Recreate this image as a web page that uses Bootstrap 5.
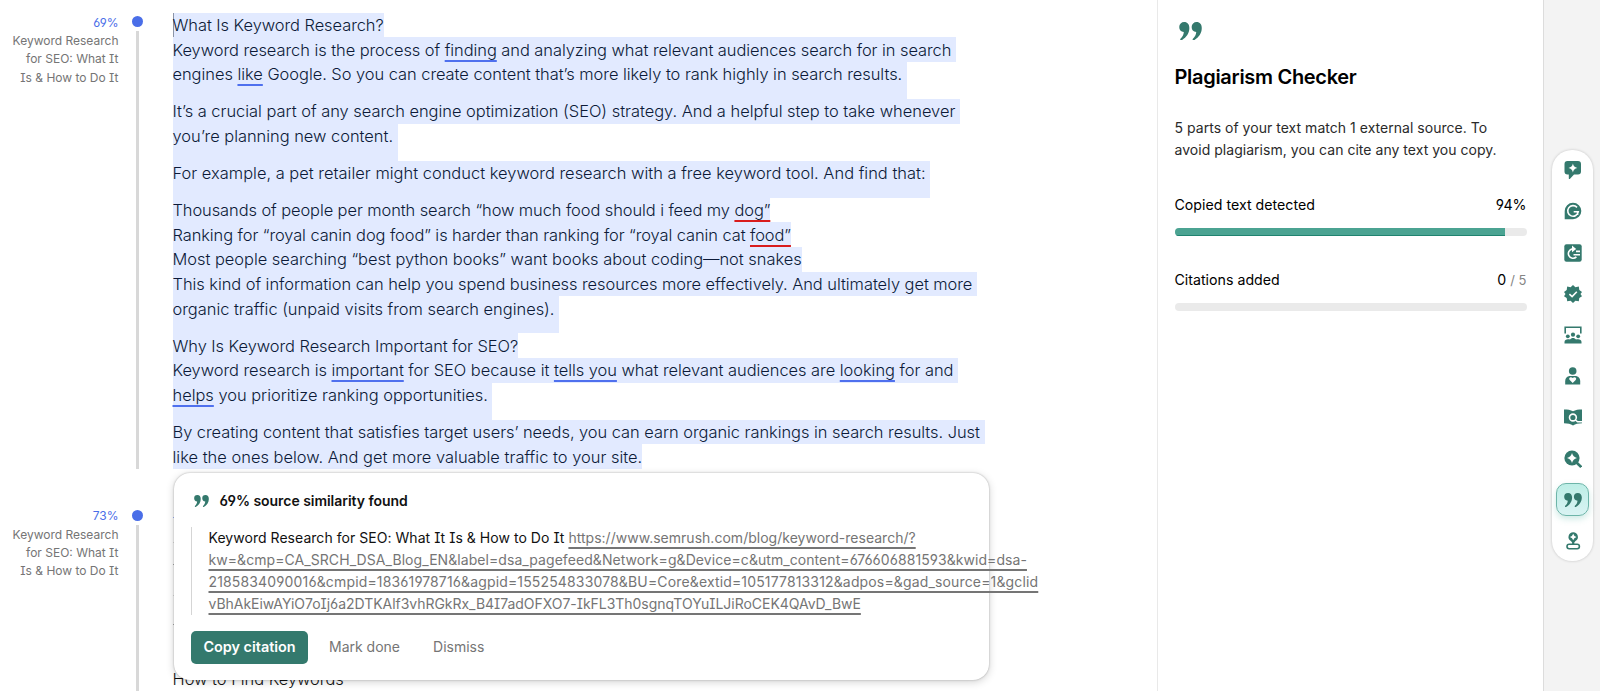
<!DOCTYPE html>
<html lang="en">
<head>
  <meta charset="UTF-8">
  <meta name="viewport" content="width=device-width, initial-scale=1">
  <title>Plagiarism Checker</title>
  <!-- Bootstrap CSS -->
  <link href="https://cdn.jsdelivr.net/npm/bootstrap@5.3.0/dist/css/bootstrap.min.css" rel="stylesheet">
  <style>
    :root { --green: #34796d; --blue: #4a6ee8; }
    body { font-family: Inter, "Liberation Sans", sans-serif; font-feature-settings: "cv08", "cv03", "cv04"; color: #111; font-size: 14px; line-height: 22px; height: 691px; }
    svg { fill: var(--green); }

    /* Editor */
    .editor { width: 1157px; height: 691px; }
    .match { height: 493.5px; padding-top: 12.5px; }
    .match-label { width: 118.5px; font-size: 12px; line-height: 18.3px; color: #757575; }
    .match-label .pct { color: var(--blue); line-height: 19.5px; }
    .track { width: 11px; margin-left: 13.5px; padding-top: 3.5px; }
    .dot { width: 11px; height: 11px; background: var(--blue); }
    .bar { width: 2.4px; background: #d8d8d8; margin-top: 4px; }
    .doc { margin-left: 29.5px; font-size: 16.44px; font-weight: 300; line-height: 24.66px; letter-spacing: -.02px; color: #0c1a38; font-feature-settings: normal; }
    .doc p { margin: 0; height: 24.66px; padding-top: .45px; width: fit-content; white-space: pre; background: #e2eaff; }
    .doc .end { height: 37.06px; }
    .doc .snug { letter-spacing: -.038px; }
    .doc .tight { letter-spacing: -.055px; }
    .doc .tighter { letter-spacing: -.085px; }
    .doc .loose { letter-spacing: .01px; }
    .doc u { text-decoration-thickness: 2px; text-underline-offset: 4px; text-decoration-skip-ink: none; text-decoration-color: #4f70ee; }
    .doc .err { text-decoration-color: #d91c1c; }
    .caret { box-shadow: inset 1px 0 #8b94a8; }
    .peeks { width: 3px; margin-top: 24px; }
    .next-title { margin-top: 27px; color: #111; }

    /* Citation popup */
    .popup { left: 174px; top: 473px; width: 815px; height: 207px; border-radius: 16px; box-shadow: 0 0 2px rgba(0,0,0,.3), 0 2px 8px rgba(0,0,0,.18); padding: 17px; }
    .popup-title { font-weight: 600; gap: 11px; padding-left: 2.5px; letter-spacing: -.04px; }
    .quote { border-left: 1.5px solid #d5d5d5; padding-left: 16.5px; margin-top: 15px; white-space: pre; letter-spacing: .04px; }
    .quote a { color: #757575; text-decoration-thickness: 1.5px; text-underline-offset: 4px; text-decoration-skip-ink: none; letter-spacing: .02px; }
    .quote .ids { letter-spacing: .066px; }
    .quote .digits { letter-spacing: .15px; }
    .quote .token { letter-spacing: -.03px; }
    .btn-cite, .btn-cite:hover { background: var(--green); color: #fff; font-weight: 600; font-size: 14.4px; line-height: 22px; padding: 5px 0; width: 117px; height: 33px; border: 0; border-radius: 5px; }
    .btn-plain { color: #757575; font-size: 14px; line-height: 22px; padding: 0; border: 0; }
    .popup-actions { margin-top: 15.5px; }
    .btn-mark { margin: 0 33px 0 21px; }

    /* Side panel */
    .panel { width: 386.5px; border-left: 1px solid #e9e9e9; border-right: 1px solid #dcdcdc; padding: 22px 16px 0 16.5px; }
    .panel-icon { margin-left: 4.5px; }
    .panel h1 { font-size: 20px; font-weight: 600; line-height: 24px; letter-spacing: -.3px; margin: 24.6px 0 0; color: #000; }
    .summary { margin: 28.4px 0 33px; color: #2a2a2a; letter-spacing: .03px; }
    .meter-label { font-size: 14.2px; line-height: 22px; color: #000; }
    .meter-label small { font-size: 13px; color: #858585; }
    .meter { height: 8px; border-radius: 4px; background: #eaeaea; margin: 12px 0 33px; }
    .meter .progress-bar { background: #4ba392; border-bottom: 1px solid #208370; }

    /* Tool rail */
    .side { background: #f3f3f3; padding: 149.5px 0 0 8.4px; }
    .rail { width: 41.5px; height: 411.5px; border-radius: 20px; box-shadow: 0 0 3px rgba(0,0,0,.2); padding-top: 4.3px; }
    .tool { width: 33px; height: 33px; margin-bottom: 8.2px; }
    .tool svg { width: 18px; height: 18px; }
    .tool.active { background: linear-gradient(#bdeee6, #d9f3f3); border: 1px solid #6db5a9; border-radius: 10px; box-shadow: 0 3px 6px rgba(60,170,150,.25); }
    .cut { fill: #fff; }
    .line { fill: none; stroke: var(--green); stroke-width: 1.6; }
    .cut-line { fill: none; stroke: #fff; stroke-width: 1.6; }
    .handle { stroke-width: 2.6; }
  </style>
</head>
<body class="bg-white overflow-hidden">
  <svg class="d-none">
    <symbol id="quotes" viewBox="0 0 20 16">
      <path d="M.2 4.4A4.3 4.3 0 0 1 4.5.1C7.4.1 9 2.3 9 5.3 9 10 6.3 13.6 2.3 15.9c-1 .3-1.7-.7-1-1.4C3 12.900 4 11.200 4.200 8.700A4.300 4.300 0 0 1 .2 4.400z"/>
      <path d="M11 4.4A4.3 4.3 0 0 1 15.3.1C18.2.1 19.8 2.3 19.8 5.3 19.8 10 17.1 13.6 13.1 15.9c-1 .3-1.7-.7-1-1.4 1.700-1.600 2.700-3.300 2.900-5.800A4.300 4.300 0 0 1 11 4.400z"/>
    </symbol>
  </svg>

  <div class="d-flex h-100">
    <main class="editor position-relative flex-shrink-0 overflow-hidden">
      <section class="match d-flex">
        <div class="match-label text-end flex-shrink-0"><div class="pct">69%</div>Keyword Research<br>for SEO: What It<br>Is &amp; How to Do It</div>
        <div class="track d-flex flex-column align-items-center flex-shrink-0">
          <div class="dot rounded-circle"></div>
          <div class="bar" style="height: 438px"></div>
        </div>
        <div class="doc">
          <p class="tight caret">What Is Keyword Research?</p>
          <p class="tight">Keyword research is the process of <u>finding</u> and analyzing what relevant audiences search for in search </p>
          <p class="end snug">engines <u>like</u> Google. So you can create content that’s more likely to rank highly in search results. </p>
          <p>It’s a crucial part of any search engine optimization (SEO) strategy. And a helpful step to take whenever </p>
          <p class="end">you’re planning new content. </p>
          <p class="end loose">For example, a pet retailer might conduct keyword research with a free keyword tool. And find that: </p>
          <p class="tighter">Thousands of people per month search “how much food should i feed my <u class="err">dog”</u></p>
          <p class="tighter">Ranking for “royal canin dog food” is harder than ranking for “royal canin cat <u class="err">food”</u></p>
          <p>Most people searching “best python books” want books about coding—not snakes</p>
          <p class="tight">This kind of information can help you spend business resources more effectively. And ultimately get more </p>
          <p class="end">organic traffic (unpaid visits from search engines). </p>
          <p class="tight">Why Is Keyword Research Important for SEO?</p>
          <p class="snug">Keyword research is <u>important</u> for SEO because it <u>tells you</u> what relevant audiences are <u>looking</u> for and </p>
          <p class="end"><u>helps</u> you prioritize ranking opportunities. </p>
          <p class="snug">By creating content that satisfies target users’ needs, you can earn organic rankings in search results. Just </p>
          <p class="loose">like the ones below. And get more valuable traffic to your site.</p>
        </div>
      </section>

      <section class="match d-flex">
        <div class="match-label text-end flex-shrink-0"><div class="pct">73%</div>Keyword Research<br>for SEO: What It<br>Is &amp; How to Do It</div>
        <div class="track d-flex flex-column align-items-center flex-shrink-0">
          <div class="dot rounded-circle"></div>
          <div class="bar" style="height: 200px"></div>
        </div>
        <div class="doc">
          <!-- line starts showing past the popup's left edge -->
          <svg class="peeks d-block overflow-visible" height="110" viewBox="0 0 3 110"><path fill="#9fb2f5" d="M0-13h2v1H0z"/><path fill="#aaa" d="M0 34h2v1H0zM0 94h2v1H0z"/><path fill="#ddd" d="M0 12h2v1H0zM0 65h2v1H0z"/></svg>
          <div class="next-title">How to Find Keywords</div>
        </div>
      </section>

      <div class="popup position-absolute bg-white">
        <div class="d-flex align-items-center popup-title">
          <svg width="15" height="12"><use href="#quotes"/></svg>
          <span>69% source similarity found</span>
        </div>
        <div class="quote">Keyword Research for SEO: What It Is &amp; How to Do It <a href="#">https://www.semrush.com/blog/keyword-research/?
<span class="ids">kw=&amp;cmp=CA_SRCH_DSA_Blog_EN&amp;label=dsa_pagefeed&amp;Network=g&amp;Device=c&amp;utm_content=676606881593&amp;kwid=dsa-</span>
<span class="digits">2185834090016&amp;cmpid=18361978716&amp;agpid=155254833078&amp;BU=Core&amp;extid=105177813312&amp;adpos=&amp;gad_source=1&amp;gclid</span>
<span class="token">vBhAkEiwAYiO7oIj6a2DTKAlf3vhRGkRx_B4I7adOFXO7-IkFL3Th0sgnqTOYuILJiRoCEK4QAvD_BwE</span></a></div>
        <div class="d-flex align-items-center popup-actions">
          <button class="btn btn-cite">Copy citation</button>
          <button class="btn btn-plain btn-mark">Mark done</button>
          <button class="btn btn-plain">Dismiss</button>
        </div>
      </div>
    </main>

    <aside class="panel flex-shrink-0">
      <svg class="panel-icon d-block" width="23" height="18.4"><use href="#quotes"/></svg>
      <h1>Plagiarism Checker</h1>
      <p class="summary">5 parts of your text match 1 external source. To<br>avoid plagiarism, you can cite any text you copy.</p>
      <div class="meter-label d-flex justify-content-between"><span>Copied text detected</span><span>94%</span></div>
      <div class="progress meter"><div class="progress-bar" style="width: 94%"></div></div>
      <div class="meter-label d-flex justify-content-between"><span>Citations added</span><span>0 <small>/ 5</small></span></div>
      <div class="progress meter"></div>
    </aside>

    <nav class="side flex-grow-1">
      <div class="rail bg-white d-flex flex-column align-items-center">
        <!-- chat sparkle -->
        <div class="tool d-flex align-items-center justify-content-center flex-shrink-0"><svg viewBox="0 0 18 18"><path d="M3.500 0h10.500a3 3 0 0 1 3 3v7.500a3 3 0 0 1-3 3H10l-4.200 4.400c-.5.4-1 .1-1-.5v-3.900H3.500a3 3 0 0 1-3-3V3a3 3 0 0 1 3-3z"/><path class="cut" d="M8.900 2.600Q9.600 6.300 13.300 7 9.600 7.700 8.900 11.400 8.200 7.700 4.500 7 8.200 6.300 8.900 2.600z"/></svg></div>
        <!-- G bubble -->
        <div class="tool d-flex align-items-center justify-content-center flex-shrink-0"><svg viewBox="0 0 18 18"><path d="M9 .7a8.300 8.300 0 1 1 0 16.600H.7V9A8.300 8.300 0 0 1 9 .7z"/><path class="cut-line" d="M13 5.400A5.300 5.300 0 1 0 14.300 9.700H9.700M13.600 9.700v3.300"/></svg></div>
        <!-- rewrite -->
        <div class="tool d-flex align-items-center justify-content-center flex-shrink-0"><svg viewBox="0 0 18 18"><rect x=".3" y=".3" width="17.400" height="17.400" rx="2.200"/><path class="cut-line" d="M9.300 4.900H8.500a4.700 4.700 0 1 0 3.900 8M12 7.400h4M9.500 10.700H16"/><path class="cut" d="M8 1.600l4.200 3.300L8 8.200z"/></svg></div>
        <!-- verified -->
        <div class="tool d-flex align-items-center justify-content-center flex-shrink-0"><svg viewBox="0 0 18 18"><path d="M9 0l2.400 2.200 3.400-.6.500 3.400L18 6.900 16.500 9l1.500 2.300-2.700 1.700-.5 3.300-3.400-.5L9 18l-2.400-2.200-3.400.5-.5-3.300L0 11.300 1.500 9 0 6.900 2.700 5l.5-3.400 3.400.6z"/><path class="cut-line" d="M5.400 9.100l2.700 2.500 4.700-4.800"/></svg></div>
        <!-- audience -->
        <div class="tool d-flex align-items-center justify-content-center flex-shrink-0"><svg viewBox="0 0 18 18"><path class="line" d="M1.200 7.500V1.200h15.600v6.300"/><circle cx="9" cy="8.700" r="2.100"/><circle cx="3.800" cy="10.300" r="1.900"/><circle cx="14.200" cy="10.300" r="1.900"/><path d="M.5 17.500v-1.500c0-1.800 1.500-2.800 3.500-2.800.8 0 1.400.1 2 .4.700-1 1.700-1.700 3-1.700s2.300.7 3 1.700c.6-.3 1.200-.4 2-.4 2 0 3.500 1 3.500 2.800v1.500z"/></svg></div>
        <!-- person heart -->
        <div class="tool d-flex align-items-center justify-content-center flex-shrink-0"><svg viewBox="0 0 18 18"><circle cx="8.700" cy="4" r="3.800"/><path d="M1.200 17.600v-3.300c0-3.200 2-5.300 5-5.300h5c3 0 5 2.100 5 5.300v3.300z"/><path class="cut" d="M8.700 15.900l-3-3c-1.500-1.600.6-4 3-2 2.400-2 4.500.4 3 2z"/></svg></div>
        <!-- book search -->
        <div class="tool d-flex align-items-center justify-content-center flex-shrink-0"><svg viewBox="0 0 18 18"><path d="M0 1.400c3.500 0 6.500.3 9 1.900 2.500-1.600 5.500-1.900 9-1.900v13.900c-4 0-6.500.8-9 2.300-2.500-1.500-5-2.300-9-2.300z"/><circle class="cut-line" cx="8.900" cy="9.500" r="3.400"/><path class="cut-line" d="M11.400 12l2.200 1.800H18"/></svg></div>
        <!-- search sparkle -->
        <div class="tool d-flex align-items-center justify-content-center flex-shrink-0"><svg viewBox="0 0 18 18"><circle cx="8" cy="8" r="7.600"/><path class="line handle" d="M12.500 12.500l4.700 4.600"/><path class="cut" d="M8 3Q9 7 13 8 9 9 8 13 7 9 3 8 7 7 8 3z"/></svg></div>
        <!-- quotes -->
        <div class="tool active d-flex align-items-center justify-content-center flex-shrink-0"><svg viewBox="0 0 20 16"><use href="#quotes"/></svg></div>
        <!-- stamp -->
        <div class="tool d-flex align-items-center justify-content-center flex-shrink-0"><svg viewBox="0 0 18 18"><path d="M9.200.2a4.700 4.700 0 0 1 2.300 8.800l-1.200 1.400v1.900H8.100v-1.900L6.900 9A4.700 4.700 0 0 1 9.200.2z"/><path class="cut" d="M9.200 1.700Q9.900 4.300 12.500 5 9.900 5.700 9.200 8.300 8.500 5.700 5.900 5 8.500 4.300 9.200 1.700z"/><rect class="line" x="3" y="12.300" width="12.400" height="4.500" rx="2.200"/></svg></div>
      </div>
    </nav>
  </div>

  <!-- Bootstrap JS Bundle -->
  <script src="https://cdn.jsdelivr.net/npm/bootstrap@5.3.0/dist/js/bootstrap.bundle.min.js"></script>
</body>
</html>
